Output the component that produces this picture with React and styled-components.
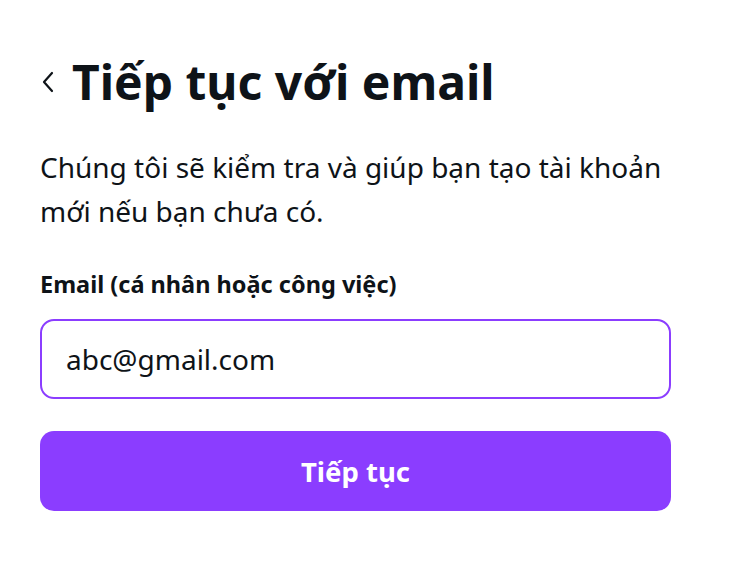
import React from 'react';
import styled, { createGlobalStyle } from 'styled-components';

const GlobalStyle = createGlobalStyle`
  html, body {
    margin: 0;
    padding: 0;
    background: #ffffff;
  }
  body {
    font-family: "Noto Sans", "Open Sans", sans-serif;
    color: #0e1318;
  }
`;

const Page = styled.div`
  width: 735px;
  min-height: 584px;
  box-sizing: border-box;
  padding: 52px 64px 0 40px;
`;

const Header = styled.div`
  display: flex;
  align-items: center;
  gap: 16px;
`;

const BackButton = styled.button`
  display: flex;
  align-items: center;
  justify-content: center;
  width: 16px;
  height: 32px;
  padding: 0;
  border: none;
  background: none;
  color: #0e1318;
  cursor: pointer;
`;

const Title = styled.h1`
  margin: 0;
  font-size: 48px;
  font-weight: 700;
  line-height: 60px;
  white-space: nowrap;
`;

const Intro = styled.p`
  margin: 33px 0 0;
  font-size: 28px;
  line-height: 44px;
  color: #0e1318;
`;

const Field = styled.label`
  display: flex;
  flex-direction: column;
  margin-top: 35px;
`;

const FieldLabel = styled.span`
  font-size: 23.5px;
  font-weight: 700;
  line-height: 32px;
`;

const Input = styled.input`
  margin-top: 19px;
  height: 80px;
  box-sizing: border-box;
  border: 2px solid #8b3dff;
  border-radius: 14px;
  padding: 0 24px;
  font-family: inherit;
  font-size: 28px;
  color: #0e1318;
  outline: none;
`;

const Submit = styled.button`
  margin-top: 32px;
  width: 100%;
  height: 80px;
  border: none;
  border-radius: 14px;
  background: #8b3dff;
  color: #ffffff;
  font-family: inherit;
  font-size: 27.5px;
  font-weight: 700;
  cursor: pointer;
`;

const ChevronLeft = () => (
  <svg width="14" height="22" viewBox="0 0 14 22" fill="none">
    <path d="M11 2 L3 11 L11 20" stroke="currentColor" strokeWidth="2.2" strokeLinecap="round" strokeLinejoin="round" />
  </svg>
);

export default function App() {
  return (
    <>
      <GlobalStyle />
      <Page>
        <Header>
          <BackButton aria-label="Quay lại">
            <ChevronLeft />
          </BackButton>
          <Title>Tiếp tục với email</Title>
        </Header>
        <Intro>
          Chúng tôi sẽ kiểm tra và giúp bạn tạo tài khoản mới nếu bạn chưa có.
        </Intro>
        <Field>
          <FieldLabel>Email (cá nhân hoặc công việc)</FieldLabel>
          <Input type="email" defaultValue="abc@gmail.com" />
        </Field>
        <Submit type="button">Tiếp tục</Submit>
      </Page>
    </>
  );
}
